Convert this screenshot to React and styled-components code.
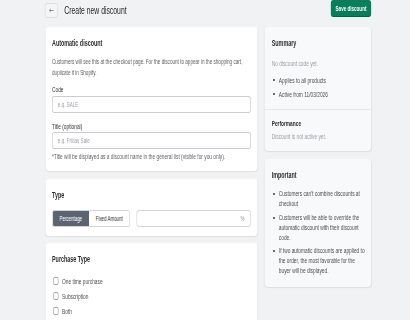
import React from "react";
import styled, { createGlobalStyle } from "styled-components";

const GlobalStyle = createGlobalStyle`
  html, body {
    margin: 0;
    padding: 0;
    background: #f1f2f3;
    overflow: hidden;
  }
  * { box-sizing: border-box; }
  body {
    font-family: "Liberation Sans", Arial, sans-serif;
    color: #303030;
  }
`;

/* The reference is horizontally compressed; the page is laid out at a
   wider virtual width and squeezed to fit the 410px window. */
const Page = styled.div`
  width: 631px;
  height: 320px;
  padding-left: 70px;
  transform: scaleX(0.65);
  transform-origin: 0 0;
`;

const Frame = styled.div`
  width: 501px;
`;

const Header = styled.header`
  display: flex;
  align-items: center;
  justify-content: space-between;
  height: 18px;
  margin-bottom: 9px;
`;

const HeaderLeft = styled.div`
  display: flex;
  align-items: center;
  gap: 10px;
  margin-left: -1px;
`;

const BackButton = styled.button`
  width: 20px;
  height: 15px;
  padding: 0;
  display: flex;
  align-items: center;
  justify-content: center;
  background: #f4f5f6;
  border: 1px solid #dcdee0;
  border-radius: 4px / 3px;
  color: #6d7175;
  font-size: 9px;
  line-height: 1;
  font-family: "DejaVu Sans", sans-serif;
  margin-top: 2px;
`;

const PageTitle = styled.h1`
  margin: 0;
  font-size: 10.5px;
  font-weight: 400;
  line-height: 14px;
  color: #262626;
  margin-top: 2px;
`;

const SaveButton = styled.button`
  width: 62px;
  height: 17px;
  padding: 0;
  border: none;
  border-radius: 4px / 3px;
  background: #0a7d5b;
  color: #ffffff;
  font-family: inherit;
  font-size: 7px;
  font-weight: 600;
  margin-top: -1px;
  box-shadow: inset 0 -1px 0 rgba(0, 0, 0, 0.2);
`;

const Layout = styled.div`
  display: grid;
  grid-template-columns: 326px 164px;
  column-gap: 11px;
  align-items: start;
`;

const Column = styled.div`
  display: flex;
  flex-direction: column;
  gap: ${(p) => p.$gap}px;
`;

const Card = styled.section`
  background: ${(p) => (p.$muted ? "#f8f9fa" : "#ffffff")};
  border-radius: 6px / 4px;
  box-shadow: 0 1px 1.5px rgba(0, 0, 0, 0.08);
  padding: ${(p) => (p.$flush ? "0" : p.$pad || "10px 10px 9.5px")};
`;

const Section = styled.div`
  padding: ${(p) => p.$pad};
  border-top: ${(p) => (p.$divided ? "1px solid #e6e7e9" : "none")};
`;

const CardTitle = styled.h2`
  margin: 0 0 ${(p) => p.$mb || 0}px;
  font-size: ${(p) => p.$size || 8.3}px;
  font-weight: 600;
  line-height: 12px;
  color: #2a2a2a;
`;

const Text = styled.p`
  margin: 0;
  font-size: ${(p) => p.$size || 7.4}px;
  line-height: ${(p) => p.$lh || 11}px;
  color: ${(p) => (p.$light ? "#9a9ea3" : "#5c5f62")};
`;

const Field = styled.div`
  display: flex;
  flex-direction: column;
  gap: ${(p) => p.$gap || 1.5}px;
  margin-top: ${(p) => p.$mt || 0}px;
`;

const Label = styled.label`
  font-size: 7.4px;
  line-height: 11px;
  color: #303030;
`;

const Input = styled.input`
  height: 17px;
  width: 100%;
  border: 1px solid #c9ccd0;
  border-radius: 4px / 3px;
  padding: 0 8px;
  font-family: inherit;
  font-size: 7px;
  color: #303030;
  background: #fff;
  outline: none;
  &::placeholder { color: #9a9ea3; }
`;

const Row = styled.div`
  display: flex;
  align-items: stretch;
  gap: 10px;
  height: 17.5px;
`;

const Segmented = styled.div`
  display: flex;
  border: 1px solid #d2d4d7;
  border-radius: 4px / 3px;
  overflow: hidden;
`;

const Segment = styled.button`
  border: none;
  padding: 0 ${(p) => p.$px}px;
  font-family: inherit;
  font-size: 6.8px;
  background: ${(p) => (p.$active ? "#5b6470" : "#ffffff")};
  color: ${(p) => (p.$active ? "#ffffff" : "#303030")};
`;

const SuffixInput = styled.div`
  flex: 1;
  display: flex;
  align-items: center;
  justify-content: flex-end;
  padding: 0 9px;
  border: 1px solid #d2d4d7;
  border-radius: 4px / 3px;
  font-size: 6.8px;
  color: #8a8d91;
`;

const CheckList = styled.div`
  display: flex;
  flex-direction: column;
  margin-top: 8.5px;
`;

const CheckRow = styled.label`
  display: flex;
  align-items: center;
  gap: 5px;
  height: 15px;
  font-size: 7.4px;
  color: #4a4d50;
`;

const Box = styled.span`
  width: 8.4px;
  height: 8.6px;
  border: 1px solid #9ea2a6;
  border-radius: 2.5px / 2px;
  background: #fff;
  margin-left: 2px;
`;

const List = styled.ul`
  list-style: none;
  margin: ${(p) => p.$mt}px 0 0;
  padding: 0;
  display: flex;
  flex-direction: column;
  gap: ${(p) => p.$gap}px;
`;

const Item = styled.li`
  display: flex;
  align-items: flex-start;
  gap: 6px;
  font-size: 7.4px;
  line-height: ${(p) => p.$lh}px;
  color: #4a4d50;
`;

const Dot = styled.span`
  flex: none;
  width: 3px;
  height: 2.2px;
  border-radius: 50%;
  background: #3a3a3a;
  margin-left: 2px;
  margin-top: ${(p) => p.$lh / 2 - 1}px;
`;

const Bullets = ({ items, lh, gap, mt }) => (
  <List $gap={gap} $mt={mt}>
    {items.map((t) => (
      <Item key={t} $lh={lh}>
        <Dot $lh={lh} />
        <span>{t}</span>
      </Item>
    ))}
  </List>
);

export default function App() {
  return (
    <>
      <GlobalStyle />
      <Page>
        <Frame>
          <Header>
            <HeaderLeft>
              <BackButton aria-label="Back">←</BackButton>
              <PageTitle>Create new discount</PageTitle>
            </HeaderLeft>
            <SaveButton>Save discount</SaveButton>
          </Header>

          <Layout>
            <Column $gap={7.5}>
              <Card>
                <CardTitle $mb={7.5}>Automatic discount</CardTitle>
                <Text $size={7.1}>
                  Customers will see this at the checkout page. For the discount to appear in the
                  shopping cart, duplicate it in Shopify.
                </Text>
                <Field $mt={5}>
                  <Label>Code</Label>
                  <Input placeholder="e.g. SALE" />
                </Field>
                <Field $mt={7.5} $gap={0.5}>
                  <Label>Title (optional)</Label>
                  <Input placeholder="e.g. Friday Sale" />
                  <Text style={{ marginTop: 1 }}>
                    *Title will be displayed as a discount name in the general list (visible for
                    you only).
                  </Text>
                </Field>
              </Card>

              <Card $pad="10px 10px 8.5px">
                <CardTitle $mb={9}>Type</CardTitle>
                <Row>
                  <Segmented>
                    <Segment $active $px={10.5}>Percentage</Segment>
                    <Segment $px={10.5}>Fixed Amount</Segment>
                  </Segmented>
                  <SuffixInput>%</SuffixInput>
                </Row>
              </Card>

              <Card $pad="10px 10px 12px">
                <CardTitle>Purchase Type</CardTitle>
                <CheckList>
                  <CheckRow><Box />One time purchase</CheckRow>
                  <CheckRow><Box />Subscription</CheckRow>
                  <CheckRow><Box />Both</CheckRow>
                </CheckList>
              </Card>
            </Column>

            <Column $gap={8}>
              <Card $muted $flush>
                <Section $pad="10px 10px 9.5px 11px">
                  <CardTitle $mb={8.5}>Summary</CardTitle>
                  <Text $light>No discount code yet.</Text>
                  <Bullets
                    lh={11}
                    gap={3}
                    mt={6}
                    items={["Applies to all products", "Active from 11/03/2026"]}
                  />
                </Section>
                <Section $divided $pad="8px 10px 9px 11px">
                  <CardTitle $size={7.4}>Performance</CardTitle>
                  <Text $light style={{ marginTop: 1 }}>Discount is not active yet.</Text>
                </Section>
              </Card>

              <Card $muted $pad="10px 5px 10.5px 11px">
                <CardTitle $mb={8}>Important</CardTitle>
                <Bullets
                  lh={10}
                  gap={3.5}
                  mt={0}
                  items={[
                    "Customers can't combine discounts at checkout",
                    "Customers will be able to override the automatic discount with their discount code.",
                    "If two automatic discounts are applied to the order, the most favorable for the buyer will be displayed.",
                  ]}
                />
              </Card>
            </Column>
          </Layout>
        </Frame>
      </Page>
    </>
  );
}
